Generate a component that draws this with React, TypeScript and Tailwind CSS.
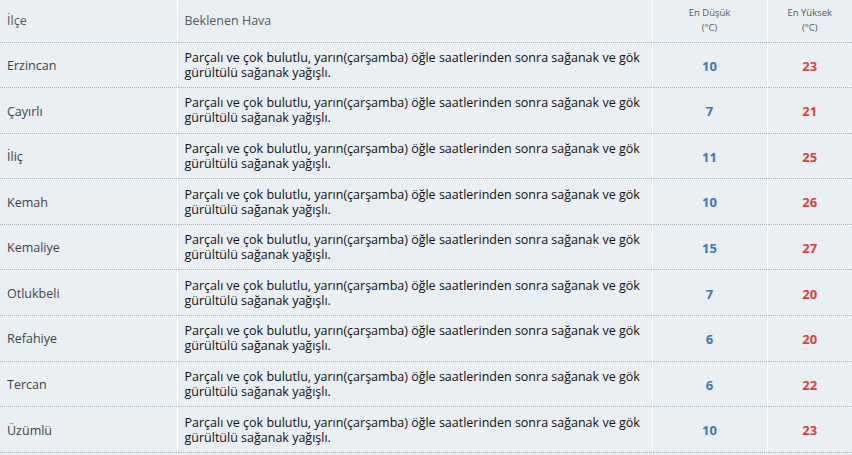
const rows: [string, number, number][] = [
  ["Erzincan", 10, 23],
  ["Çayırlı", 7, 21],
  ["İliç", 11, 25],
  ["Kemah", 10, 26],
  ["Kemaliye", 15, 27],
  ["Otlukbeli", 7, 20],
  ["Refahiye", 6, 20],
  ["Tercan", 6, 22],
  ["Üzümlü", 10, 23],
];

const desc =
  "Parçalı ve çok bulutlu, yarın(çarşamba) öğle saatlerinden sonra sağanak ve gök gürültülü sağanak yağışlı.";

export default function App() {
  return (
    <div className="w-[852px] h-[455px] overflow-hidden bg-[#e9eff3] font-['Open_Sans',sans-serif]">
      <table className="w-full border-collapse table-fixed">
        <colgroup>
          <col className="w-[177px]" />
          <col className="w-[475px]" />
          <col className="w-[115px]" />
          <col />
        </colgroup>
        <thead>
          <tr className="h-[42px] border-b border-dotted border-[#a9b3bb]">
            <th className="border-r border-white text-left font-normal text-[12.5px] text-[#5a5a5a] pl-[7px] pt-[2px]">
              İlçe
            </th>
            <th className="border-r border-white text-left font-normal text-[12.5px] text-[#5a5a5a] pl-[7px] pt-[2px]">
              Beklenen Hava
            </th>
            <th className="border-r border-white font-normal text-[9.5px] leading-[15px] text-[#5a5a5a] pb-[1px]">
              En Düşük
              <br />
              (°C)
            </th>
            <th className="font-normal text-[9.5px] leading-[15px] text-[#5a5a5a] pb-[1px]">
              En Yüksek
              <br />
              (°C)
            </th>
          </tr>
        </thead>
        <tbody>
          {rows.map(([name, lo, hi]) => (
            <tr key={name} className="h-[45.6px] border-b border-dotted border-[#a9b3bb]">
              <td className="border-r border-white pl-[7px] pt-[3px] text-[12.5px] text-[#444]">{name}</td>
              <td className="border-r border-white pl-[7px] pr-[8px] text-[12.5px] leading-[15px] text-[#111]">
                <div className="w-[456px]">{desc}</div>
              </td>
              <td className="border-r border-white text-center pt-[3px] text-[13px] font-bold text-[#3c78b4]">
                {lo}
              </td>
              <td className="text-center pt-[3px] text-[13px] font-bold text-[#d8413d]">{hi}</td>
            </tr>
          ))}
        </tbody>
      </table>
    </div>
  );
}
